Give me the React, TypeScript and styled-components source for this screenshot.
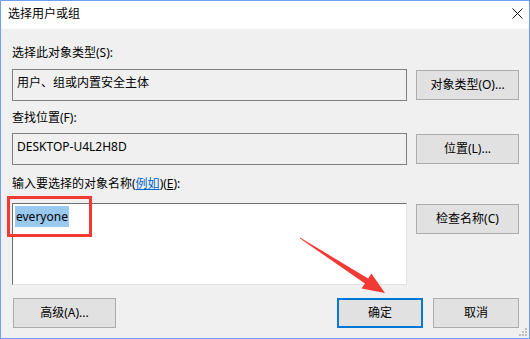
import styled, { createGlobalStyle } from "styled-components";

const GlobalStyle = createGlobalStyle`
  html, body {
    margin: 0;
    padding: 0;
    background: #ffffff;
  }
  body {
    font-family: "Noto Sans", "Noto Sans CJK SC", sans-serif;
  }
`;

const Window = styled.div`
  position: relative;
  width: 530px;
  height: 339px;
  box-sizing: border-box;
  border: 1px solid #6f9ff2;
  background: #f0f0f0;
  display: flex;
  flex-direction: column;
  font-size: 12px;
  color: #000;
  overflow: hidden;
`;

const TitleBar = styled.div`
  height: 28px;
  background: #fff;
  display: flex;
  align-items: center;
  justify-content: space-between;
  padding-left: 7px;
  padding-right: 6px;
`;

const Title = styled.span`
  line-height: 16px;
  margin-top: -2px;
`;

const CloseIcon = styled.svg`
  width: 11px;
  height: 11px;
  margin-top: -4px;
`;

const Content = styled.div`
  padding: 0 10px 0 11px;
  display: flex;
  flex-direction: column;
`;

const Label = styled.div<{ $gap: number }>`
  line-height: 16px;
  margin-top: ${(p) => p.$gap}px;
`;

const Link = styled.span`
  color: #0066cc;
  text-decoration: underline;
`;

const Key = styled.span`
  text-decoration: underline;
`;

const Row = styled.div<{ $gap: number }>`
  display: grid;
  grid-template-columns: 395px 103px;
  column-gap: 9px;
  align-items: start;
  margin-top: ${(p) => p.$gap}px;
`;

const ReadOnlyBox = styled.div`
  height: 32px;
  box-sizing: border-box;
  border: 1px solid #7f7f7f;
  padding: 5px 4px;
  line-height: 16px;
`;

const NameInput = styled.div`
  height: 82px;
  box-sizing: border-box;
  background: #fff;
  border-top: 1px solid #6e6e6e;
  border-left: 1px solid #6e6e6e;
  border-right: 1px solid #e3e3e3;
  border-bottom: 1px solid #e3e3e3;
  padding: 2px 2px;
`;

const Selected = styled.span`
  display: inline-block;
  background: #99c9ef;
  line-height: 21px;
  padding: 0 1px;
`;

const Button = styled.button<{ $width?: number; $default?: boolean }>`
  width: ${(p) => p.$width ?? 103}px;
  height: 30px;
  margin-top: 1px;
  box-sizing: border-box;
  background: #e1e1e1;
  border: ${(p) => (p.$default ? "2px solid #0078d7" : "1px solid #adadad")};
  font: inherit;
  font-size: 12px;
  color: #000;
  padding: 0;
  line-height: 16px;
`;

const Footer = styled.div`
  display: flex;
  justify-content: space-between;
  margin-top: 12px;
  padding-left: 1px;
`;

const FooterRight = styled.div`
  display: flex;
  gap: 10px;
`;

const RedFrame = styled.div`
  position: absolute;
  left: 6px;
  top: 195px;
  width: 85px;
  height: 41px;
  box-sizing: border-box;
  border: 3px solid #f23a35;
  pointer-events: none;
`;

const Overlay = styled.svg`
  position: absolute;
  left: -1px;
  top: -1px;
  width: 530px;
  height: 339px;
  pointer-events: none;
`;

const App = () => (
  <Window>
    <GlobalStyle />
    <TitleBar>
      <Title>选择用户或组</Title>
      <CloseIcon viewBox="0 0 11 11">
        <path d="M0.5 0.5 L10.5 10.5 M10.5 0.5 L0.5 10.5" stroke="#111" strokeWidth="1" fill="none" />
      </CloseIcon>
    </TitleBar>
    <Content>
      <Label $gap={16}>选择此对象类型(S):</Label>
      <Row $gap={8}>
        <ReadOnlyBox>用户、组或内置安全主体</ReadOnlyBox>
        <Button>对象类型(O)...</Button>
      </Row>
      <Label $gap={9}>查找位置(F):</Label>
      <Row $gap={7}>
        <ReadOnlyBox>DESKTOP-U4L2H8D</ReadOnlyBox>
        <Button>位置(L)...</Button>
      </Row>
      <Label $gap={11}>
        输入要选择的对象名称(<Link>例如</Link>)(<Key>E</Key>):
      </Label>
      <Row $gap={11}>
        <NameInput>
          <Selected>everyone</Selected>
        </NameInput>
        <Button>检查名称(C)</Button>
      </Row>
      <Footer>
        <Button $width={103}>高级(A)...</Button>
        <FooterRight>
          <Button $width={86} $default>
            确定
          </Button>
          <Button $width={86}>取消</Button>
        </FooterRight>
      </Footer>
    </Content>
    <RedFrame />
    <Overlay viewBox="0 0 530 339">
      <polygon
        points="300,237.5 368.1,278.5 371.4,273.4 385,293 361.6,288.6 364.9,283.5 300,238.5"
        fill="#f23a35"
      />
      <g fill="#bdbdbd">
        <rect x="525" y="328" width="2" height="2" />
        <rect x="522" y="331" width="2" height="2" />
        <rect x="525" y="331" width="2" height="2" />
        <rect x="519" y="334" width="2" height="2" />
        <rect x="522" y="334" width="2" height="2" />
        <rect x="525" y="334" width="2" height="2" />
      </g>
    </Overlay>
  </Window>
);

export default App;
